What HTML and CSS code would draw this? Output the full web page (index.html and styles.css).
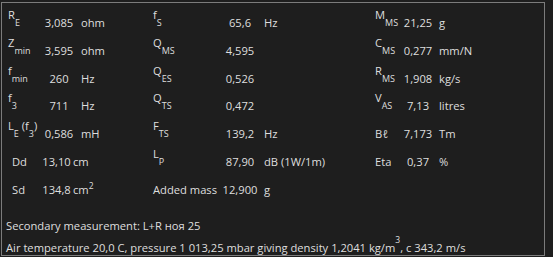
FILE: index.html
```html
<!DOCTYPE html>
<html>
<head>
<meta charset="utf-8">
<link rel="stylesheet" href="styles.css">
</head>
<body>
<div class="panel">
  <div class="table">
    <span class="lbl"><span class="m">R</span><span class="s">E</span></span>
    <span class="val">3,085</span>
    <span class="unit">ohm</span>
    <span class="lbl"><span class="m">f</span><span class="s">S</span></span>
    <span class="val">65,6</span>
    <span class="unit">Hz</span>
    <span class="lbl"><span class="m">M</span><span class="s">MS</span></span>
    <span class="val">21,25</span>
    <span class="unit">g</span>

    <span class="lbl"><span class="m">Z</span><span class="s">min</span></span>
    <span class="val">3,595</span>
    <span class="unit">ohm</span>
    <span class="lbl"><span class="m">Q</span><span class="s">MS</span></span>
    <span class="val">4,595</span>
    <span class="unit"></span>
    <span class="lbl"><span class="m">C</span><span class="s">MS</span></span>
    <span class="val">0,277</span>
    <span class="unit">mm/N</span>

    <span class="lbl"><span class="m">f</span><span class="s">min</span></span>
    <span class="val">260</span>
    <span class="unit">Hz</span>
    <span class="lbl"><span class="m">Q</span><span class="s">ES</span></span>
    <span class="val">0,526</span>
    <span class="unit"></span>
    <span class="lbl"><span class="m">R</span><span class="s">MS</span></span>
    <span class="val">1,908</span>
    <span class="unit">kg/s</span>

    <span class="lbl"><span class="m">f</span><span class="s">3</span></span>
    <span class="val">711</span>
    <span class="unit">Hz</span>
    <span class="lbl"><span class="m">Q</span><span class="s">TS</span></span>
    <span class="val">0,472</span>
    <span class="unit"></span>
    <span class="lbl"><span class="m">V</span><span class="s">AS</span></span>
    <span class="val">7,13</span>
    <span class="unit">litres</span>

    <span class="lbl"><span class="m">L</span><span class="s">E</span><span class="m"> (f</span><span class="s">3</span><span class="m">)</span></span>
    <span class="val">0,586</span>
    <span class="unit">mH</span>
    <span class="lbl"><span class="m">F</span><span class="s">TS</span></span>
    <span class="val">139,2</span>
    <span class="unit">Hz</span>
    <span class="lbl">Bℓ</span>
    <span class="val">7,173</span>
    <span class="unit">Tm</span>

    <span class="lbl lbl-in">Dd</span>
    <span class="val val-l">13,10</span>
    <span class="unit unit-pull">cm</span>
    <span class="lbl"><span class="m">L</span><span class="s">P</span></span>
    <span class="val">87,90</span>
    <span class="unit">dB (1W/1m)</span>
    <span class="lbl">Eta</span>
    <span class="val">0,37</span>
    <span class="unit">%</span>

    <span class="lbl lbl-in">Sd</span>
    <span class="val val-l">134,8</span>
    <span class="unit unit-pull">cm<sup class="sup">2</sup></span>
    <span class="lbl">Added mass</span>
    <span class="val">12,900</span>
    <span class="unit">g</span>
    <span class="lbl"></span>
    <span class="val"></span>
    <span class="unit"></span>
  </div>
  <div class="footer">
    <div class="line">Secondary measurement: L+R ноя 25</div>
    <div class="line">Air temperature 20,0 C, pressure 1 013,25 mbar giving density 1,2041 kg/m<sup class="sup sup-hi">3</sup>, c 343,2 m/s</div>
  </div>
</div>
</body>
</html>
```

FILE: styles.css
```css
html, body {
  margin: 0;
  padding: 0;
  background: #1e1e1e;
}

body {
  width: 553px;
  height: 257px;
  overflow: hidden;
  font-family: "Open Sans", "Noto Sans", "DejaVu Sans", sans-serif;
  font-size: 11.2px;
  color: #dedede;
}

.panel {
  margin: 2px 0 0 1px;
  width: 542px;
  height: 252px;
  border: 1px solid #7c7c7c;
  display: flex;
  flex-direction: column;
}

.table {
  margin: 6px 0 0 6px;
  display: grid;
  grid-template-columns: 32px 38px 75px 66px 42px 114px 25px 36px 1fr;
  grid-auto-rows: 27.8px;
  line-height: 27.8px;
  white-space: nowrap;
}

.lbl {
  white-space: nowrap;
}

.lbl-in {
  padding-left: 4px;
}

.m {
  line-height: 1;
  vertical-align: 8px;
}

.s {
  font-size: 9px;
  line-height: 1;
  vertical-align: 1px;
}

.val {
  text-align: center;
}

.val-l {
  padding-right: 5px;
}

.unit {
  padding-left: 3px;
}

.unit-pull {
  margin-left: -8px;
}

.sup {
  font-size: 8.5px;
  line-height: 1;
  vertical-align: 5px;
}

.sup-hi {
  vertical-align: 9px;
}

.footer {
  margin-top: 11px;
  padding-left: 4px;
  line-height: 21px;
  white-space: nowrap;
}
```
